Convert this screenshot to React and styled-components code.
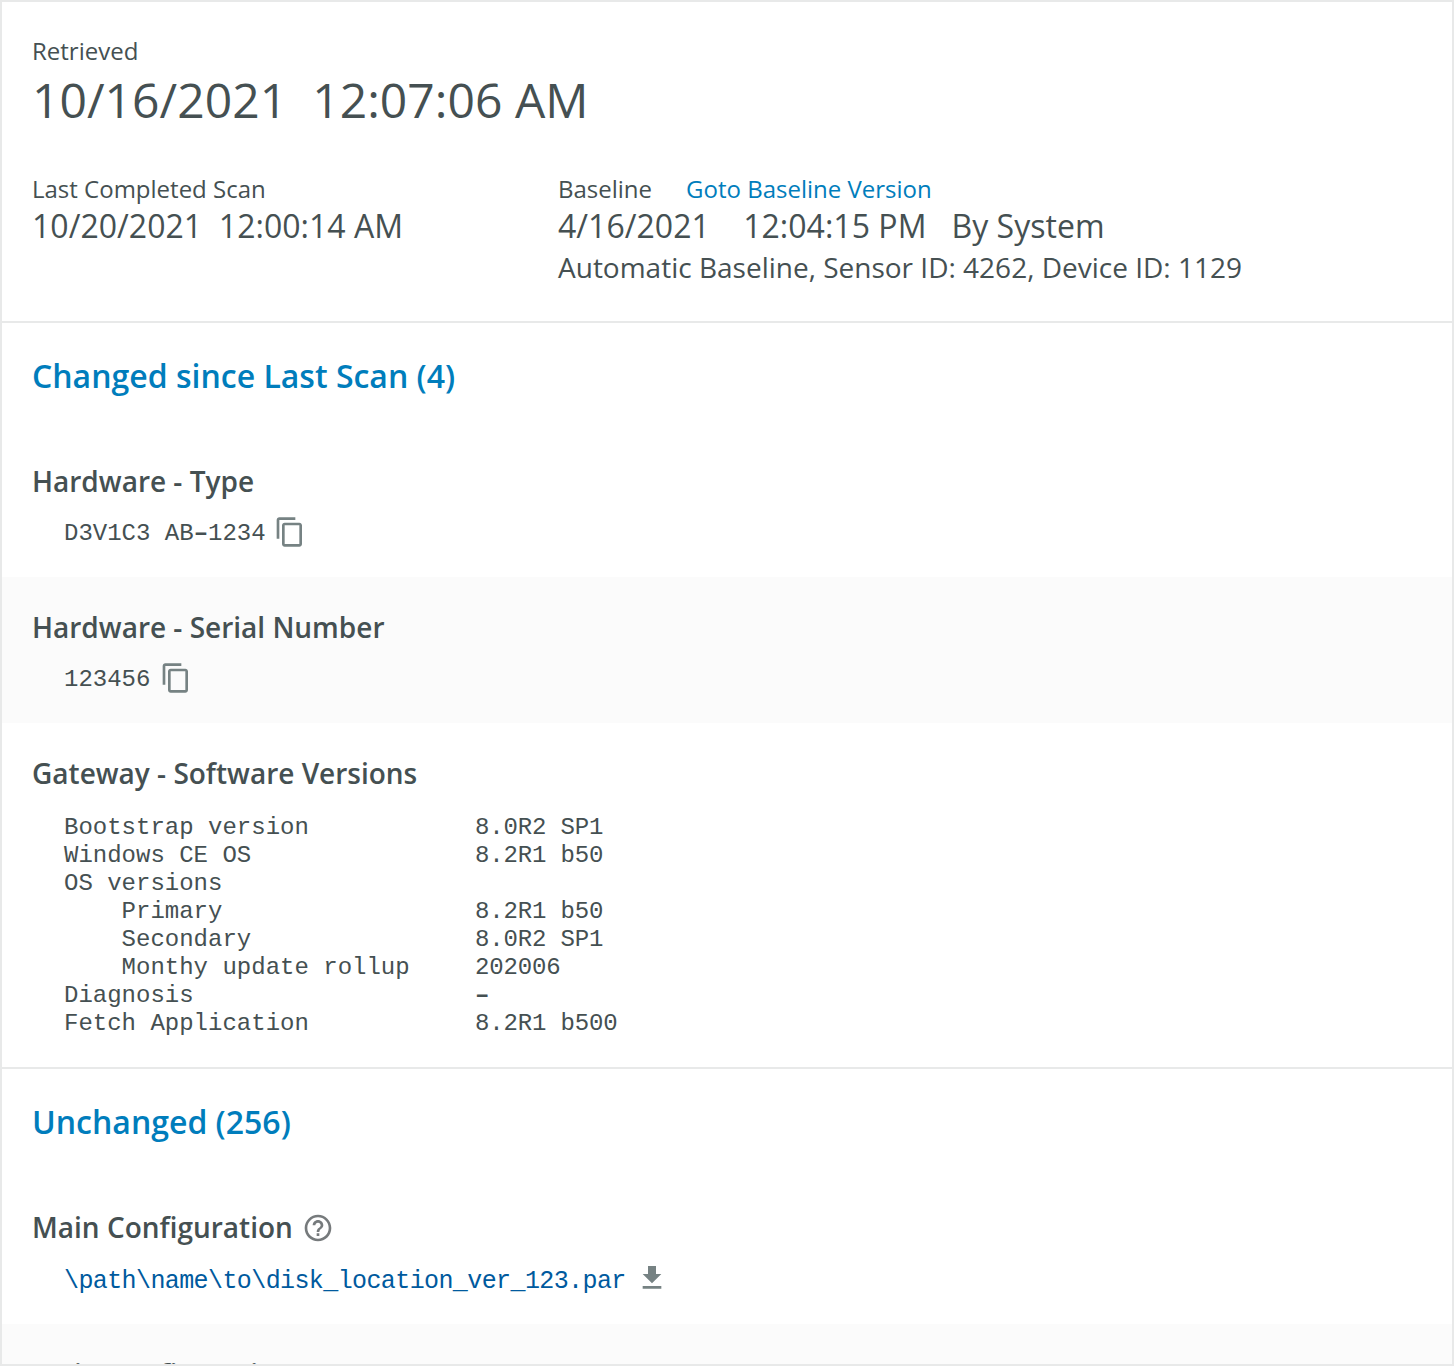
import React from "react";
import styled, { createGlobalStyle } from "styled-components";

const Global = createGlobalStyle`
  * { box-sizing: border-box; }
  body { margin: 0; background: #fff; overflow: hidden; }
`;
const Page = styled.main`
  height: 1366px;
  overflow: hidden;
  border: 2px solid #e8e9e9;
  font-family: "Open Sans", sans-serif;
  color: #455052;
  background: #fff;
`;
const Summary = styled.header`
  height: 321px;
  padding: 31px 30px 0;
  border-bottom: 2px solid #e8e9e9;
`;
const Label = styled.div`
  font-size: 24px;
  line-height: 36px;
  white-space: pre;
`;
const Big = styled.div`
  font-size: 48px;
  line-height: 62px;
  letter-spacing: 0.04px;
  white-space: pre;
`;
const Columns = styled.div`
  display: grid;
  grid-template-columns: 526px 1fr;
  margin-top: 40px;
`;
const Value = styled.div`
  font-size: 32px;
  line-height: 38px;
  letter-spacing: 0.03px;
  white-space: pre;
`;
const Note = styled.div`
  padding-top: 1px;
  font-size: 28px;
  line-height: 43px;
`;
const Link = styled.a`
  color: #007dbc;
  margin-left: 34px;
`;
const Section = styled.section`
  height: ${(p) => p.$h}px;
  border-bottom: 2px solid #e8e9e9;
`;
const SectionTitle = styled.h2`
  margin: 0;
  padding: 31px 30px 0;
  height: 108px;
  font-size: 32px;
  line-height: 44px;
  font-weight: 600;
  color: #007dbc;
`;
const Item = styled.article`
  height: ${(p) => p.$h || 146}px;
  padding: 30px 30px 0;
  background: ${(p) => (p.$shade ? "#fbfbfb" : "#fff")};
`;
const ItemTitle = styled.h3`
  margin: 0 0 1px;
  display: flex;
  align-items: center;
  gap: 9px;
  height: 40px;
  font-size: 28px;
  line-height: 40px;
  font-weight: 600;
`;
const Code = styled.div`
  display: flex;
  align-items: center;
  gap: ${(p) => p.$gap || 8}px;
  height: 60px;
  padding-left: 32px;
  font: 24px/28px "Liberation Mono", monospace;
  white-space: pre;
`;
const CodeText = styled.span`
  padding-top: 3px;
`;
const Versions = styled.div`
  display: grid;
  grid-template-columns: 411px 1fr;
  padding: 20px 0 0 32px;
  font: 24px/28px "Liberation Mono", monospace;
  white-space: pre;
`;
const VersionValue = styled.span`
  letter-spacing: -0.15px;
`;
const Dash = styled.span`
  font-weight: 700;
`;
const Path = styled.a`
  padding-top: 7px;
  color: #005a9e;
  font-size: 25px;
  letter-spacing: -0.6px;
`;
const Icon = styled.svg.attrs({ width: 32, height: 32, viewBox: "0 0 24 24" })`
  flex: none;
  fill: ${(p) => p.$color || "#768283"};
`;
const HelpGlyph = styled(Icon)`
  margin-top: 2px;
`;

const CopyIcon = () => (
  <Icon>
    <path d="M16 1H4c-1.1 0-2 .9-2 2v14h2V3h12V1zm3 4H8c-1.1 0-2 .9-2 2v14c0 1.1.9 2 2 2h11c1.1 0 2-.9 2-2V7c0-1.1-.9-2-2-2zm0 16H8V7h11v14z" />
  </Icon>
);
const HelpIcon = () => (
  <HelpGlyph $color="#767a7c">
    <path d="M11 18h2v-2h-2v2zm1-16C6.48 2 2 6.48 2 12s4.48 10 10 10 10-4.48 10-10S17.52 2 12 2zm0 18c-4.41 0-8-3.59-8-8s3.59-8 8-8 8 3.59 8 8-3.59 8-8 8zm0-14c-2.21 0-4 1.79-4 4h2c0-1.1.9-2 2-2s2 .9 2 2c0 2-3 1.75-3 5h2c0-2.25 3-2.5 3-5 0-2.21-1.79-4-4-4z" />
  </HelpGlyph>
);
const DownloadIcon = () => (
  <Icon>
    <path d="M19 9h-4V3H9v6H5l7 7 7-7zM5 18v2h14v-2H5z" />
  </Icon>
);

const rows = [
  ["Bootstrap version", "8.0R2 SP1"],
  ["Windows CE OS", "8.2R1 b50"],
  ["OS versions", ""],
  ["    Primary", "8.2R1 b50"],
  ["    Secondary", "8.0R2 SP1"],
  ["    Monthy update rollup", "202006"],
  ["Diagnosis", "–"],
  ["Fetch Application", "8.2R1 b500"],
];

export default function App() {
  return (
    <Page>
      <Global />
      <Summary>
        <Label>Retrieved</Label>
        <Big>{"10/16/2021  12:07:06 AM"}</Big>
        <Columns>
          <div>
            <Label>Last Completed Scan</Label>
            <Value>{"10/20/2021  12:00:14 AM"}</Value>
          </div>
          <div>
            <Label>Baseline<Link>Goto Baseline Version</Link></Label>
            <Value>{"4/16/2021    12:04:15 PM   By System"}</Value>
            <Note>Automatic Baseline, Sensor ID: 4262, Device ID: 1129</Note>
          </div>
        </Columns>
      </Summary>
      <Section $h={746}>
        <SectionTitle>Changed since Last Scan (4)</SectionTitle>
        <Item>
          <ItemTitle>Hardware - Type</ItemTitle>
          <Code><CodeText>D3V1C3 AB<Dash>–</Dash>1234</CodeText><CopyIcon /></Code>
        </Item>
        <Item $shade>
          <ItemTitle>Hardware - Serial Number</ItemTitle>
          <Code $gap={10}><CodeText>123456</CodeText><CopyIcon /></Code>
        </Item>
        <Item $h={340}>
          <ItemTitle>Gateway - Software Versions</ItemTitle>
          <Versions>
            {rows.map(([name, value]) => (
              <React.Fragment key={name}>
                <span>{name}</span>
                <VersionValue>{value === "–" ? <Dash>{value}</Dash> : value}</VersionValue>
              </React.Fragment>
            ))}
          </Versions>
        </Item>
      </Section>
      <Section $h={500}>
        <SectionTitle>Unchanged (256)</SectionTitle>
        <Item $h={147}>
          <ItemTitle>Main Configuration<HelpIcon /></ItemTitle>
          <Code $gap={10}><Path>{"\\path\\name\\to\\disk_location_ver_123.par"}</Path><DownloadIcon /></Code>
        </Item>
        <Item $shade>
          <ItemTitle>Main Configuration</ItemTitle>
        </Item>
      </Section>
    </Page>
  );
}
